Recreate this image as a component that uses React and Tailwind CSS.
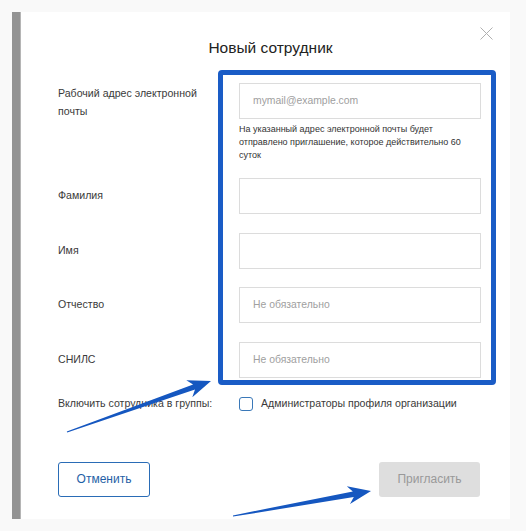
import React from 'react';

const FONT = { fontFamily: '"Liberation Sans", Arial, "Noto Sans", sans-serif' };

// annotation arrow: thin tail, widening shaft, triangular head
function arrowPoints(x1, y1, x2, y2, headLen = 20, headHalf = 9) {
  const dx = x2 - x1, dy = y2 - y1;
  const len = Math.hypot(dx, dy);
  const ux = dx / len, uy = dy / len;
  const nx = -uy, ny = ux;
  const bx = x2 - ux * headLen, by = y2 - uy * headLen;
  const p = (x, y) => `${x.toFixed(1)},${y.toFixed(1)}`;
  return [
    p(x1 + nx * 0.6, y1 + ny * 0.6),
    p(bx + ux * 2 + nx * 2.8, by + uy * 2 + ny * 2.8),
    p(bx - ux * 3 + nx * headHalf, by - uy * 3 + ny * headHalf),
    p(x2, y2),
    p(bx - ux * 3 - nx * headHalf, by - uy * 3 - ny * headHalf),
    p(bx + ux * 2 - nx * 2.8, by + uy * 2 - ny * 2.8),
    p(x1 - nx * 0.6, y1 - ny * 0.6),
  ].join(' ');
}

function Field({ placeholder = '' }) {
  return (
    <div className="w-[242px] h-[36px] border border-[#dcdcdc] bg-white flex items-center pl-[13px] text-[10.4px] text-[#a0a0a0]">
      {placeholder}
    </div>
  );
}

function Row({ label, children, className = '' }) {
  return (
    <div className={`flex items-center ${className}`}>
      <div className="w-[181px] shrink-0 text-[10.6px] text-[#3a3a3a]">{label}</div>
      {children}
    </div>
  );
}

export default function App() {
  return (
    <div className="relative w-[526px] h-[531px] bg-[#f9f9f9] overflow-hidden" style={FONT}>
      <div className="flex pt-[12px] pl-[12px]">
        <div className="w-[9px] h-[507px] bg-[#939393] border-r border-[#b5b5b5]" />
        <div className="relative w-[489px] h-[507px] bg-white pl-[37px]">
          <button className="absolute left-[459px] top-[15px] w-[13px] h-[13px]">
            <svg width="13" height="13" viewBox="0 0 13 13">
              <path d="M0.5 0.5 L12.5 12.5 M12.5 0.5 L0.5 12.5" stroke="#b0b0b0" strokeWidth="1" fill="none" />
            </svg>
          </button>
          <div className="pt-[27px] pr-[27px] text-center text-[15.5px] leading-[18px] text-[#222]">Новый сотрудник</div>

          <div className="flex mt-[26px]">
            <div className="w-[181px] shrink-0 pt-[1px] text-[10.6px] leading-[18px] text-[#3a3a3a]">
              Рабочий адрес электронной<br />почты
            </div>
            <div>
              <Field placeholder="mymail@example.com" />
              <p className="w-[242px] mt-[4px] text-[9px] leading-[13px] text-[#333]">
                На указанный адрес электронной почты будет<br />отправлено приглашение, которое действительно 60<br />суток
              </p>
            </div>
          </div>

          <Row label="Фамилия" className="mt-[16px]"><Field /></Row>
          <Row label="Имя" className="mt-[19px]"><Field /></Row>
          <Row label="Отчество" className="mt-[18px]"><Field placeholder="Не обязательно" /></Row>
          <Row label="СНИЛС" className="mt-[19px]"><Field placeholder="Не обязательно" /></Row>

          <Row label="Включить сотрудника в группы:" className="mt-[18px]">
            <span className="w-[14px] h-[14px] rounded-[3px] border-[1.5px] border-[#3a78b8] shrink-0" />
            <span className="ml-[8px] text-[10.6px] text-[#3a3a3a]">Администраторы профиля организации</span>
          </Row>

          <div className="flex justify-between w-[422px] mt-[50px]">
            <button className="w-[92px] h-[35px] rounded-[3px] border border-[#2a6cb6] text-[12px] text-[#1f5fa6]">Отменить</button>
            <button className="w-[101px] h-[35px] rounded-[3px] bg-[#dedede] text-[12px] text-[#999]">Пригласить</button>
          </div>
        </div>
      </div>

      <div className="absolute left-[218px] top-[70px] w-[278px] h-[315px] border-[5px] border-[#1a5cc6] rounded-[4px] pointer-events-none" />

      <svg className="absolute inset-0 pointer-events-none" width="526" height="531">
        <polygon points={arrowPoints(67, 432, 211, 381)} fill="#1557c0" />
        <polygon points={arrowPoints(233, 516, 371, 491)} fill="#1557c0" />
      </svg>
    </div>
  );
}
